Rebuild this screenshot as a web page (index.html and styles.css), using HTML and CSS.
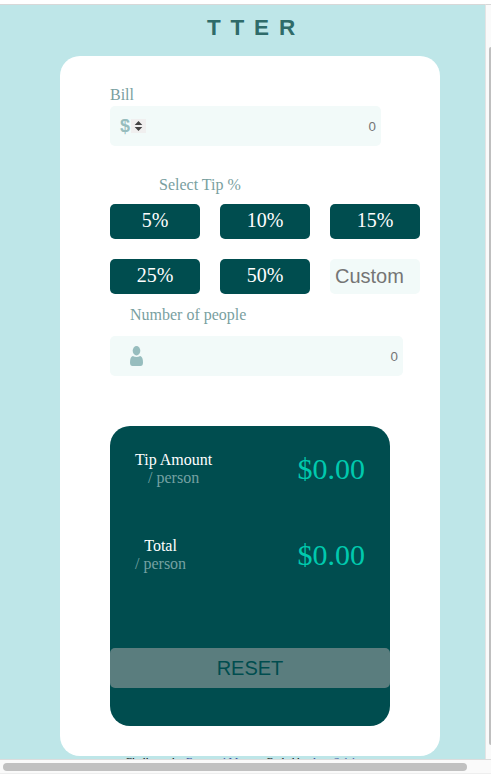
FILE: index.html
```html
<!DOCTYPE html>
<html lang="en">
<head>
<meta charset="utf-8">
<title>Tip calculator</title>
<link rel="stylesheet" href="styles.css">
</head>
<body>
<div class="window">
  <div class="viewport">
    <h1 class="logo">TTER</h1>
    <main class="card">
      <label class="label">Bill</label>
      <div class="field field-bill">
        <span class="dollar">$</span>
        <span class="spinner"><svg width="9" height="10" viewBox="0 0 9 10"><path d="M0.7 4 4.5 0 8.3 4ZM0.7 6H8.3L4.5 10Z" fill="#444"/></svg></span>
        <span class="value">0</span>
      </div>
      <div class="label label-tip">Select Tip %</div>
      <div class="tips">
        <div class="tip">5%</div>
        <div class="tip">10%</div>
        <div class="tip">15%</div>
        <div class="tip">25%</div>
        <div class="tip">50%</div>
        <input class="custom" placeholder="Custom">
      </div>
      <label class="label label-people">Number of people</label>
      <div class="field field-people">
        <svg class="person" width="13" height="20" viewBox="0 0 13 20"><ellipse cx="6.5" cy="4.8" rx="3.8" ry="4.7"/><path d="M2.8 9.9Q6.5 12 10.2 9.9Q13 10.8 13 16.5Q13 20 10.4 20H2.6Q0 20 0 16.5Q0 10.8 2.8 9.9Z"/></svg>
        <span class="value">0</span>
      </div>
      <section class="results">
        <div class="row">
          <div class="caption">Tip Amount<br><span class="per">/ person</span></div>
          <div class="amount">$0.00</div>
        </div>
        <div class="row">
          <div class="caption">Total<br><span class="per">/ person</span></div>
          <div class="amount">$0.00</div>
        </div>
        <button class="reset">RESET</button>
      </section>
    </main>
    <footer class="attribution">Challenge by <a href="#">Frontend Mentor</a>. Coded by <a href="#">Amr Saleh</a>.</footer>
  </div>
  <div class="track-y"><div class="thumb-y"></div></div>
  <div class="track-x"><div class="thumb-x"></div></div>
</div>
</body>
</html>
```
FILE: styles.css
```css
* { box-sizing: border-box; }
body { margin: 0; background: #fff; font: 16px/18px "Liberation Serif", serif; overflow: hidden; }
.window {
  display: grid;
  grid-template-columns: 486px 5px;
  grid-template-rows: 755px 15px;
  height: 774px;
  padding-top: 4px;
}
.viewport {
  overflow: hidden;
  background: #bee6e8;
  border-top: 1px solid #d8d8d8;
  border-right: 1px solid #e4e4e4;
}
.logo {
  margin: 0;
  padding: 9px 0 0 207px;
  height: 51px;
  color: #2f6b69;
  font: bold 22.5px/28px "Liberation Sans", sans-serif;
  letter-spacing: 9.8px;
}
.card {
  width: 380px;
  height: 700px;
  margin-left: 60px;
  padding: 30px 20px 0 50px;
  border-radius: 20px;
  background: #fff;
}
.label { display: block; height: 20px; color: #79a09f; }
.field {
  display: flex;
  align-items: center;
  height: 40px;
  border-radius: 5px;
  background: #f2faf9;
}
.field-bill { width: 271px; padding: 0 5px 0 10px; }
.field-people { width: 293px; padding: 0 5px 0 20px; }
.dollar { width: 11px; color: #97bdbe; font: bold 18px/40px "Liberation Sans", sans-serif; height: 40px; }
.spinner {
  display: flex;
  align-items: center;
  justify-content: center;
  width: 15px;
  height: 14px;
  background: #f0efef;
}
.value { margin-left: auto; height: 40px; color: #757575; font: 13.33px/42px "Liberation Sans", sans-serif; }
.label-tip { margin: 30px 0 0; padding-left: 49px; height: 28px; }
.tips {
  display: grid;
  grid-template-columns: repeat(3, 90px);
  grid-auto-rows: 35px;
  gap: 20px;
}
.tip {
  border-radius: 5px;
  background: #004d4f;
  color: #fff;
  font-size: 20px;
  line-height: 33px;
  text-align: center;
}
.custom {
  width: 90px;
  height: 35px;
  padding: 0 5px;
  border: 0;
  border-radius: 5px;
  background: #f2faf9;
  font: 20px "Liberation Sans", sans-serif;
}
.custom::placeholder { color: #757575; }
.label-people { margin-top: 12px; padding-left: 20px; height: 30px; }
.person { fill: #97bdbe; }
.results {
  display: flex;
  flex-direction: column;
  width: 280px;
  height: 300px;
  margin-top: 50px;
  padding-top: 25px;
  border-radius: 20px;
  background: #004d4f;
}
.row {
  display: flex;
  justify-content: space-between;
  height: 86px;
  padding: 0 25px;
}
.caption { color: #fff; text-align: center; }
.per { color: #75a1a2; }
.amount { color: #00c9ae; font-size: 30px; line-height: 36px; }
.reset {
  width: 280px;
  height: 40px;
  margin-top: 25px;
  padding: 0;
  border: 0;
  border-radius: 5px;
  background: #5a7d7e;
  color: #004d4f;
  font: 20px "Liberation Sans", sans-serif;
}
.attribution {
  padding-left: 125px;
  font-size: 11px;
  line-height: 11px;
  white-space: nowrap;
}
.attribution a { color: #3e52a3; }
.track-y { border-top: 1px solid #d8d8d8; background: #fafafa; padding: 42px 0 0 3px; }
.thumb-y { width: 2px; height: 698px; border-radius: 2px 0 0 2px; background: #bfbfbf; }
.track-x {
  grid-column: 1 / 3;
  border-top: 1px solid #dcdcdc;
  border-bottom: 1px solid #eee;
  background: #fafafa;
  padding: 3px 0 0 3px;
}
.thumb-x { width: 464px; height: 8px; border-radius: 4px; background: #c1c1c1; }
```
